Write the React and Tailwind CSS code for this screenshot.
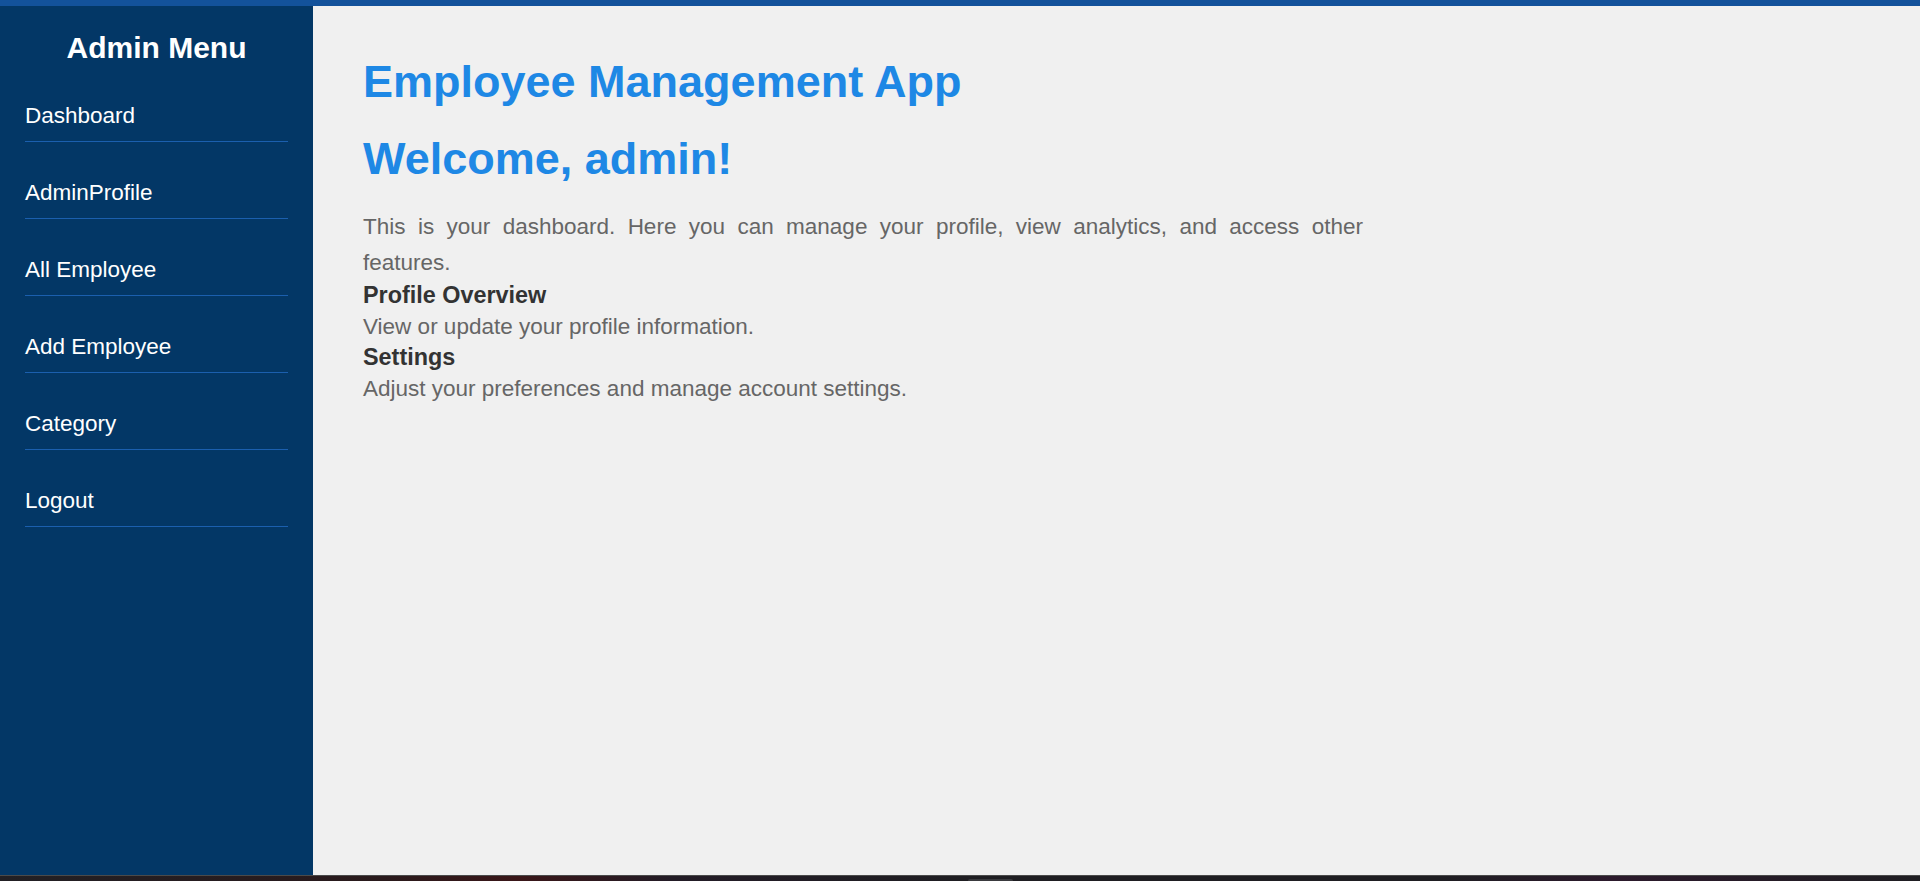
import React from "react";

const items = ["Dashboard", "AdminProfile", "All Employee", "Add Employee", "Category", "Logout"];

export default function App() {
  return (
    <div className="w-full h-[881px] flex flex-col overflow-hidden bg-[#f0f0f0] [font-family:'Liberation_Sans',Arial,sans-serif]">
      <div className="h-[6px] w-full bg-[#13529b] shrink-0" />
      <div className="flex flex-1 min-h-0">
        <aside className="w-[313px] shrink-0 bg-[#033766] px-[25px] pt-[24px]">
          <h2 className="text-center text-white font-bold text-[30px] leading-[35px]">Admin Menu</h2>
          <ul>
            {items.map((it) => (
              <li
                key={it}
                className="pt-[38px] pb-[13px] leading-[25px] border-b border-[#1b5fae] text-white text-[22.5px]"
              >
                {it}
              </li>
            ))}
          </ul>
        </aside>
        <main className="flex-1 bg-[#f0f0f0] pt-[50px] pl-[50px]">
          <h1 className="text-[45px] leading-[52px] font-bold text-[#1e88e5]">Employee Management App</h1>
          <h2 className="mt-[25px] text-[45px] leading-[52px] font-bold text-[#1e88e5]">Welcome, admin!</h2>
          <p className="mt-[24px] max-w-[1000px] text-justify text-[22.5px] leading-[36px] text-[#666666]">
            This is your dashboard. Here you can manage your profile, view analytics, and access other features.
          </p>
          <div className="-mt-[1.5px] text-[22.5px] leading-[31px]">
            <h3 className="font-bold text-[23.4px] text-[#333333]">Profile Overview</h3>
            <p className="text-[#666666]">View or update your profile information.</p>
            <h3 className="font-bold text-[23.4px] text-[#333333]">Settings</h3>
            <p className="text-[#666666]">Adjust your preferences and manage account settings.</p>
          </div>
        </main>
      </div>
      <div className="h-[6px] shrink-0 w-full border-t border-[#4a4a4a] bg-[linear-gradient(90deg,#222024_0%,#2a1a1c_20%,#3a1618_27%,#231c26_35%,#1f1e22_50%,#1f1e22_75%,#2c1a2c_84%,#1f1e22_100%)] relative">
        <div className="absolute left-[968px] top-[3px] w-[45px] h-[2px] rounded-t bg-[#3a3a3e]" />
      </div>
    </div>
  );
}
